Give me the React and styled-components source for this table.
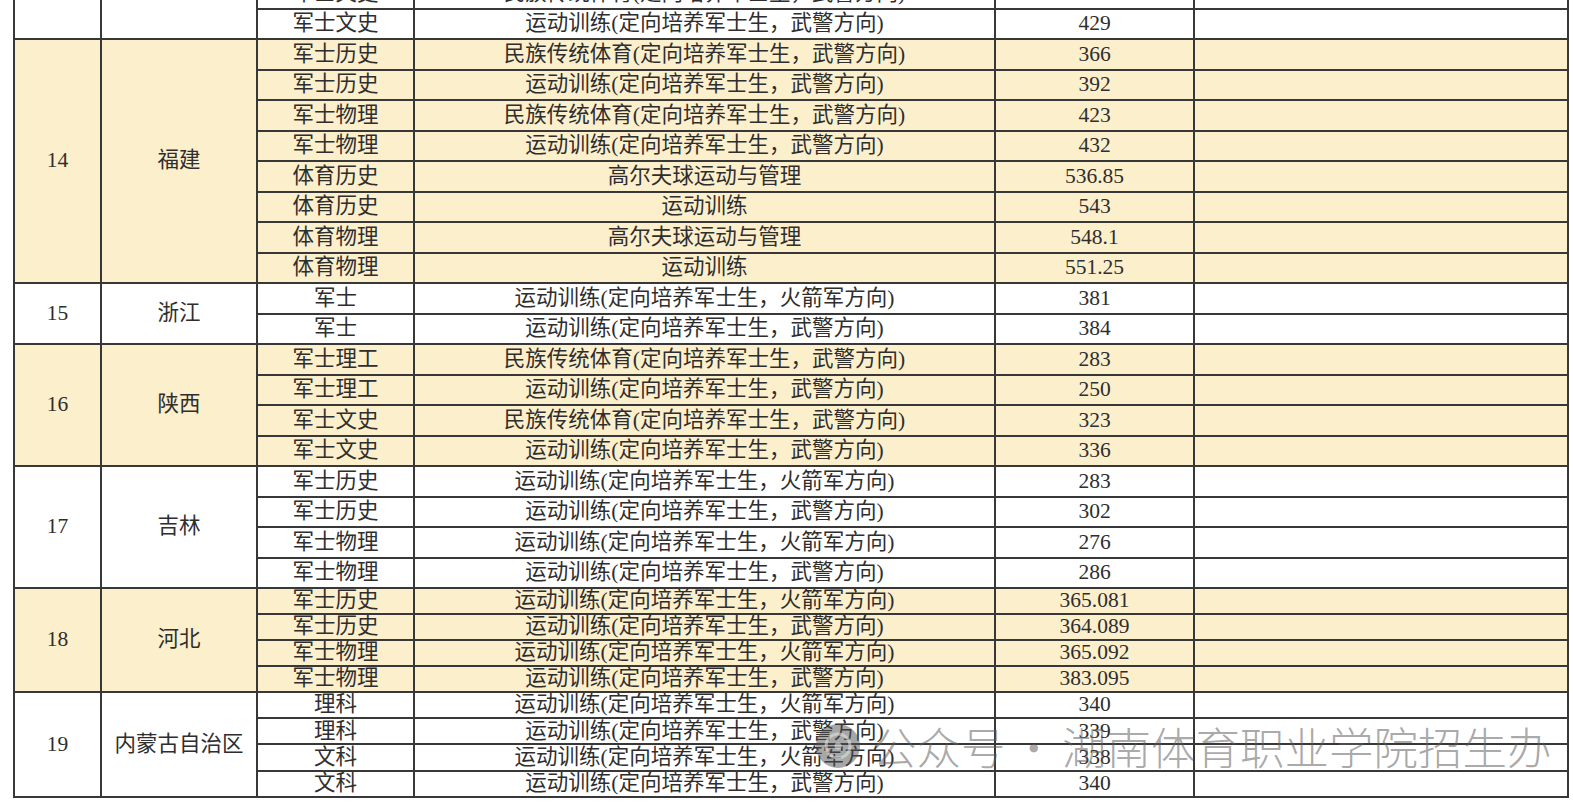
import React from "react";
import styled, { createGlobalStyle } from "styled-components";

const Global = createGlobalStyle`
  html, body { margin: 0; padding: 0; background: #ffffff; }
  #root { width: 1573px; height: 807px; }
`;

const Page = styled.div`
  position: relative;
  width: 1573px;
  height: 807px;
  overflow: hidden;
  background: #ffffff;
`;

const TableWrap = styled.div`
  margin: -23px 0 0 13px;
`;

const Table = styled.table`
  table-layout: fixed;
  width: 1554px;
  border-collapse: collapse;
  font-family: "Liberation Serif", "Noto Sans CJK SC", serif;
  font-size: 21.5px;
  color: #2e2e2e;
`;

const Col = styled.col`
  width: ${(p) => p.$w}px;
`;

const Row = styled.tr`
  height: ${(p) => p.$h}px;
`;

const Cell = styled.td`
  border: 2px solid #383838;
  padding: 0;
  line-height: 1;
  text-align: center;
  vertical-align: middle;
  white-space: nowrap;
  overflow: hidden;
  background: ${(p) => (p.$shaded ? "#fcefcc" : "#ffffff")};
`;

const Watermark = styled.div`
  position: absolute;
  left: 812px;
  top: 721px;
  height: 50px;
  display: flex;
  align-items: center;
  pointer-events: none;
`;

const WatermarkText = styled.span`
  font-family: "Noto Sans CJK SC", sans-serif;
  font-weight: 300;
  font-size: 44.5px;
  color: rgba(95, 95, 95, 0.55);
  line-height: 1;
  white-space: nowrap;
  margin-left: ${(p) => p.$gap || 0}px;
`;

const WA = "运动训练(定向培养军士生，武警方向)";
const RA = "运动训练(定向培养军士生，火箭军方向)";
const MA = "民族传统体育(定向培养军士生，武警方向)";

const groups = [
  {
    no: "",
    prov: "",
    shaded: false,
    h: 30.5,
    rows: [
      ["军士文史", MA, "413"],
      ["军士文史", WA, "429"],
    ],
  },
  {
    no: "14",
    prov: "福建",
    shaded: true,
    h: 30.5,
    rows: [
      ["军士历史", MA, "366"],
      ["军士历史", WA, "392"],
      ["军士物理", MA, "423"],
      ["军士物理", WA, "432"],
      ["体育历史", "高尔夫球运动与管理", "536.85"],
      ["体育历史", "运动训练", "543"],
      ["体育物理", "高尔夫球运动与管理", "548.1"],
      ["体育物理", "运动训练", "551.25"],
    ],
  },
  {
    no: "15",
    prov: "浙江",
    shaded: false,
    h: 30.5,
    rows: [
      ["军士", RA, "381"],
      ["军士", WA, "384"],
    ],
  },
  {
    no: "16",
    prov: "陕西",
    shaded: true,
    h: 30.5,
    rows: [
      ["军士理工", MA, "283"],
      ["军士理工", WA, "250"],
      ["军士文史", MA, "323"],
      ["军士文史", WA, "336"],
    ],
  },
  {
    no: "17",
    prov: "吉林",
    shaded: false,
    h: 30.5,
    rows: [
      ["军士历史", RA, "283"],
      ["军士历史", WA, "302"],
      ["军士物理", RA, "276"],
      ["军士物理", WA, "286"],
    ],
  },
  {
    no: "18",
    prov: "河北",
    shaded: true,
    h: 26,
    rows: [
      ["军士历史", RA, "365.081"],
      ["军士历史", WA, "364.089"],
      ["军士物理", RA, "365.092"],
      ["军士物理", WA, "383.095"],
    ],
  },
  {
    no: "19",
    prov: "内蒙古自治区",
    shaded: false,
    h: 26.2,
    rows: [
      ["理科", RA, "340"],
      ["理科", WA, "339"],
      ["文科", RA, "338"],
      ["文科", WA, "340"],
    ],
  },
];

const WeChatIcon = () => (
  <svg width="56" height="50" viewBox="0 0 56 50" aria-hidden="true">
    <circle cx="26" cy="25" r="22" fill="rgba(80,80,80,0.5)" />
    <circle cx="26" cy="25" r="12" fill="none" stroke="rgba(230,230,230,0.55)" strokeWidth="3" />
    <circle cx="26" cy="25" r="3.5" fill="rgba(230,230,230,0.55)" />
  </svg>
);

export default function App() {
  return (
    <Page>
      <Global />
      <TableWrap>
        <Table>
          <colgroup>
            <Col $w={87} />
            <Col $w={156} />
            <Col $w={157} />
            <Col $w={581} />
            <Col $w={199} />
            <Col $w={374} />
          </colgroup>
          <tbody>
            {groups.map((g, gi) =>
              g.rows.map((r, ri) => (
                <Row key={`${gi}-${ri}`} $h={g.h}>
                  {ri === 0 && (
                    <Cell rowSpan={g.rows.length} $shaded={g.shaded}>
                      {g.no}
                    </Cell>
                  )}
                  {ri === 0 && (
                    <Cell rowSpan={g.rows.length} $shaded={g.shaded}>
                      {g.prov}
                    </Cell>
                  )}
                  <Cell $shaded={g.shaded}>{r[0]}</Cell>
                  <Cell $shaded={g.shaded}>{r[1]}</Cell>
                  <Cell $shaded={g.shaded}>{r[2]}</Cell>
                  <Cell $shaded={g.shaded} />
                </Row>
              ))
            )}
          </tbody>
        </Table>
      </TableWrap>
      <Watermark>
        <WeChatIcon />
        <WatermarkText $gap={4}>公众号</WatermarkText>
        <WatermarkText $gap={6}>·</WatermarkText>
        <WatermarkText $gap={6}>湖南体育职业学院招生办</WatermarkText>
      </Watermark>
    </Page>
  );
}
